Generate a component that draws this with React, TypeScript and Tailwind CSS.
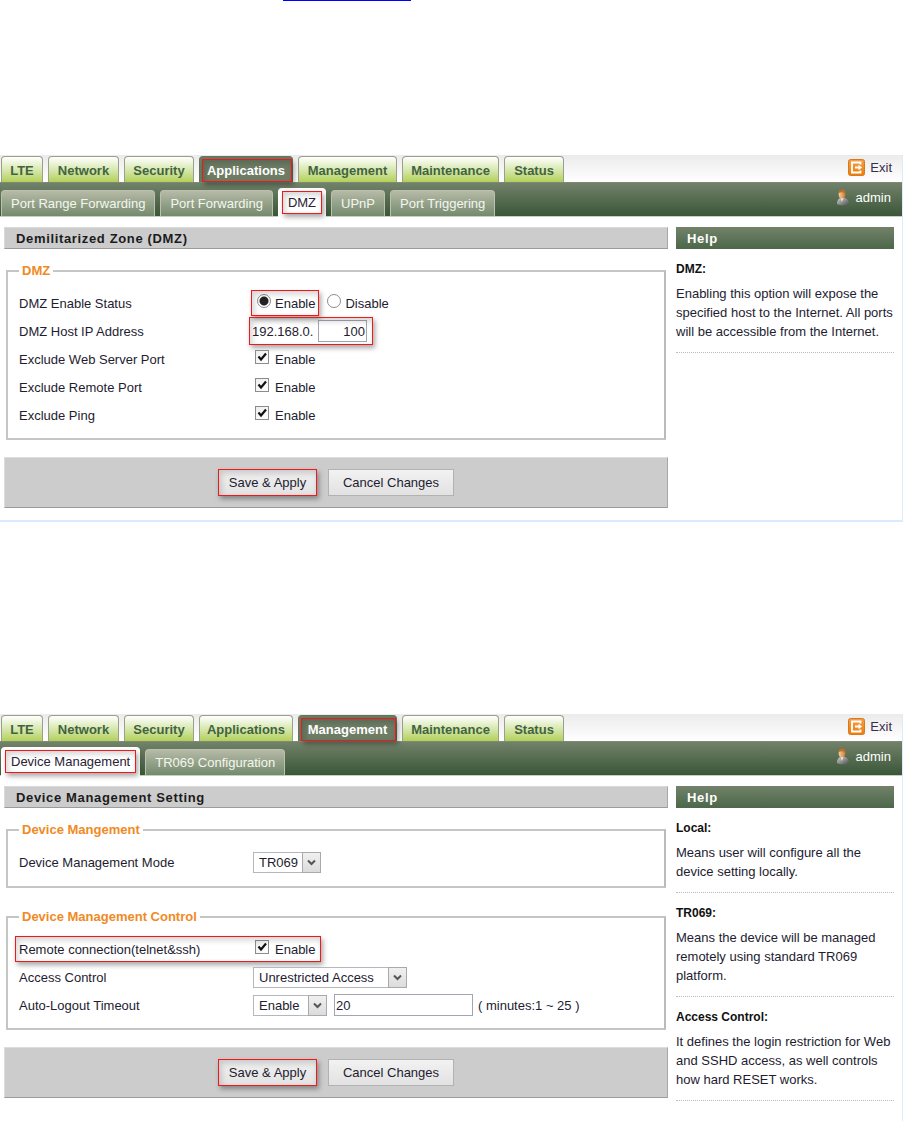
import { ReactNode } from "react";
import clsx from "clsx";

const mainTabs = [
    { name: "LTE", width: "w-[42px]" },
    { name: "Network", width: "w-[71px]" },
    { name: "Security", width: "w-[70px]" },
    { name: "Applications", width: "w-[94px]" },
    { name: "Management", width: "w-[99px]" },
    { name: "Maintenance", width: "w-[97px]" },
    { name: "Status", width: "w-[60px]" },
];

interface HelpItem {
    title: string;
    text: string;
}

interface RouterPageProps {
    activeTab: string;
    subTabs: string[];
    activeSubTab: string;
    title: string;
    help: HelpItem[];
    className?: string;
    children: ReactNode;
}

// Red frame drawn around the thing the reader has to click
function Highlight({ className }: { className: string }) {
    return (
        <span
            className={clsx(
                "absolute pointer-events-none border border-[#f01818] shadow-[2px_3px_5px_rgba(0,0,0,0.35),inset_2px_3px_6px_rgba(0,0,0,0.18)]",
                className
            )}
        />
    );
}

function ExitIcon() {
    return (
        <svg width="17" height="17" viewBox="0 0 17 17" className="shrink-0" aria-hidden="true">
            <defs>
                <linearGradient id="exitFill" x1="0" y1="0" x2="0" y2="1">
                    <stop offset="0" stopColor="#f0a04c" />
                    <stop offset="1" stopColor="#ee7d08" />
                </linearGradient>
            </defs>
            <rect x="0.5" y="0.5" width="16" height="16" rx="2" fill="url(#exitFill)" stroke="#d9791c" />
            <path d="M12.500 5.500V3.500H4V13.500H12.500V11.500" fill="none" stroke="#fff" strokeWidth="1.800" />
            <path d="M7 7.600H10.500V5.800L14.200 8.500L10.500 11.200V9.400H7Z" fill="#fff" />
        </svg>
    );
}

function UserIcon() {
    return (
        <svg width="14" height="17" viewBox="0 0 14 17" className="shrink-0" aria-hidden="true">
            <defs>
                <linearGradient id="userBody" x1="0" y1="0" x2="1" y2="1">
                    <stop offset="0" stopColor="#d4d4d4" />
                    <stop offset="1" stopColor="#4c4c4c" />
                </linearGradient>
                <linearGradient id="userHead" x1="0" y1="0" x2="1" y2="0">
                    <stop offset="0" stopColor="#f6cf98" />
                    <stop offset="1" stopColor="#d07a2c" />
                </linearGradient>
            </defs>
            <path d="M1 15C1 11 3 8.500 6.500 8.500C10 8.500 13 11 13 15C10 16.800 4 16.800 1 15Z" fill="url(#userBody)" />
            <path d="M5 9L5.800 13L7.500 9Z" fill="#f4f4f4" />
            <ellipse cx="6" cy="5.200" rx="3.300" ry="4.300" fill="url(#userHead)" />
            <path d="M2.700 4C2.700 1.500 4 0.500 6 0.500C8.500 0.500 10 2 9.300 6C8.500 3.600 6.500 2.400 2.700 4Z" fill="#b8702c" />
        </svg>
    );
}

function RouterPage({ activeTab, subTabs, activeSubTab, title, help, className, children }: RouterPageProps) {
    return (
        <section className={clsx("mr-px border-r border-[#d9ebfc]", className)}>
            {/* MAIN TABS */}
            <header className="flex h-[27px] items-end justify-between bg-gradient-to-b from-[#ebebeb] to-white pl-px pr-[10px]">
                <nav className="flex gap-[5px]">
                    {mainTabs.map(tab => {
                        const active = tab.name === activeTab;
                        return (
                            <a
                                key={tab.name}
                                href="#"
                                className={clsx(
                                    "relative flex h-[26px] justify-center rounded-t border border-b-0 font-bold leading-[28px]",
                                    tab.width,
                                    active
                                        ? "z-10 border-[#66765d] bg-[#6d7c64] text-white"
                                        : "border-[#9a9f90] bg-gradient-to-b from-white to-[#b3d055] text-[#426341]"
                                )}
                            >
                                {tab.name}
                                {active && <Highlight className="left-[2px] right-0 top-[2px] bottom-0" />}
                            </a>
                        );
                    })}
                </nav>
                <a href="#" className="flex h-[27px] items-center gap-[5px] pb-[3px] text-[#3a2d4c]">
                    <ExitIcon />
                    Exit
                </a>
            </header>

            {/* SUB TABS */}
            <div className="flex h-[35px] items-end justify-between border-t border-b border-t-[#7f8a75] border-b-[#c9cfbe] bg-gradient-to-b from-[#72826a] to-[#3a5638] pl-px pr-[11px]">
                <nav className="flex items-end gap-[5px]">
                    {subTabs.map(tab => {
                        const active = tab === activeSubTab;
                        return (
                            <a
                                key={tab}
                                href="#"
                                className={clsx(
                                    "relative rounded-t border border-b-0 px-[9px]",
                                    active
                                        ? "-mb-px h-[29px] border-white bg-white leading-[28px] text-[#2a2236]"
                                        : "h-[26px] border-[#bcc1ae] bg-gradient-to-b from-[#b6baa6] to-[#738a6e] leading-[26px] text-[#f4f6ee]"
                                )}
                            >
                                {tab}
                                {active && <Highlight className="left-[3px] right-[3px] top-[2px] bottom-[3px]" />}
                            </a>
                        );
                    })}
                </nav>
                <span className="flex h-[27px] items-start gap-[6px] text-white">
                    <UserIcon />
                    <span className="leading-[18px]">admin</span>
                </span>
            </div>

            {/* CONTENT */}
            <div className="flex gap-2 pl-1 pr-2 pt-[10px] pb-3">
                <main className="min-w-0 flex-1">
                    <h2 className="h-[22px] border border-t-[#d9d9d9] border-l-[#d9d9d9] border-r-[#a8a8a8] border-b-[#9b9b9b] bg-[#ccc] px-[11px] font-bold leading-[21px] tracking-wider text-[#1b1b1b]">
                        {title}
                    </h2>
                    {children}
                </main>

                <aside className="w-[218px] shrink-0">
                    <h2 className="h-[22px] bg-gradient-to-b from-[#72826a] to-[#4c6749] px-[11px] font-bold leading-[23px] tracking-wider text-white">
                        Help
                    </h2>
                    {help.map(item => (
                        <div key={item.title} className="border-b border-dotted border-[#bbb] pt-[11px] pb-[11px]">
                            <h3 className="text-xs font-bold leading-[19px] text-[#111]">{item.title}</h3>
                            <p className="mt-[5px] leading-[19px]">{item.text}</p>
                        </div>
                    ))}
                </aside>
            </div>
        </section>
    );
}

function Group({ legend, className, children }: { legend: string; className?: string; children: ReactNode }) {
    return (
        <fieldset className={clsx("mx-[2px] border-2 border-[#c3c6c3] border-r-[#b9bcb9] px-[11px] pt-[10px]", className)}>
            <legend className="px-[3px] font-bold leading-4 text-[#f08a24]">{legend}</legend>
            {children}
        </fieldset>
    );
}

function Row({ label, htmlFor, highlight, children }: { label: string; htmlFor?: string; highlight?: ReactNode; children: ReactNode }) {
    return (
        <div className="relative flex h-7 items-center">
            {htmlFor ? (
                <label htmlFor={htmlFor} className="w-[234px]">{label}</label>
            ) : (
                <span className="w-[234px]">{label}</span>
            )}
            <div className="flex items-center">{children}</div>
            {highlight}
        </div>
    );
}

function Radio({ label, checked, highlighted }: { label: string; checked?: boolean; highlighted?: boolean }) {
    return (
        <label className="relative flex items-center gap-1">
            <input
                type="radio"
                name="dmzStatus"
                defaultChecked={checked}
                className="mb-1 size-[14px] appearance-none rounded-full border border-[#8c8c8c] bg-white checked:bg-[radial-gradient(circle,#222_0,#222_4px,#fff_5px)]"
            />
            {label}
            {highlighted && <Highlight className="-left-[6px] -right-[4px] -top-[4px] -bottom-[3px]" />}
        </label>
    );
}

function Checkbox({ id }: { id: string }) {
    return (
        <span className="flex items-center gap-[6px] pl-[2px]">
            <span className="relative mb-1 size-[14px]">
                <input
                    id={id}
                    type="checkbox"
                    defaultChecked
                    className="peer block size-[14px] appearance-none border border-[#8c8c8c] bg-gradient-to-br from-[#eee] to-white"
                />
                <svg viewBox="0 0 14 14" className="pointer-events-none absolute inset-0 hidden peer-checked:block" aria-hidden="true">
                    <path d="M3.500 6.500L6 9.500L11 3.500" fill="none" stroke="#111" strokeWidth="2.200" />
                </svg>
            </span>
            <label htmlFor={id}>Enable</label>
        </span>
    );
}

function Select({ id, options, className }: { id: string; options: string[]; className: string }) {
    return (
        <span className={clsx("relative block h-[21px]", className)}>
            <select
                id={id}
                className="block h-full w-full appearance-none border border-[#b6b6be] bg-white pt-px pl-[5px] pr-5 leading-[18px]"
            >
                {options.map(option => (
                    <option key={option}>{option}</option>
                ))}
            </select>
            <span className="pointer-events-none absolute inset-y-0 right-0 flex w-[19px] items-center justify-center border border-[#a9a9ad] bg-gradient-to-b from-[#f0f0f0] to-[#dcdcdc]">
                <svg width="9" height="7" viewBox="0 0 9 7" aria-hidden="true">
                    <path d="M1 1.500L4.500 5L8 1.500" fill="none" stroke="#555" strokeWidth="2" />
                </svg>
            </span>
        </span>
    );
}

function Actions() {
    return (
        <div className="mt-[17px] flex h-[51px] items-center justify-center gap-[11px] border border-t-[#ddd] border-l-[#ddd] border-r-[#a8a8a8] border-b-[#9b9b9b] bg-[#ccc]">
            <button type="submit" className="relative h-[27px] w-[99px] bg-gradient-to-b from-[#f2f2f2] to-[#e2e2e2]">
                Save &amp; Apply
                <Highlight className="inset-0" />
            </button>
            <button type="button" className="h-[27px] w-[126px] border border-[#b2b2b2] bg-gradient-to-b from-[#f2f2f2] to-[#e2e2e2]">
                Cancel Changes
            </button>
        </div>
    );
}

export default function App() {
    return (
        <div className="flex min-h-screen flex-col bg-white font-['Liberation_Sans',Arial,sans-serif] text-[13px] leading-[19px] text-[#231c30]">
            <div className="ml-[283px] h-px w-32 bg-[#0000ff]" />

            {/* DMZ */}
            <RouterPage
                activeTab="Applications"
                subTabs={["Port Range Forwarding", "Port Forwarding", "DMZ", "UPnP", "Port Triggering"]}
                activeSubTab="DMZ"
                title="Demilitarized Zone (DMZ)"
                help={[
                    {
                        title: "DMZ:",
                        text: "Enabling this option will expose the specified host to the Internet. All ports will be accessible from the Internet.",
                    },
                ]}
                className="mt-[154px] border-b-2"
            >
                <form>
                    <Group legend="DMZ" className="mt-[14px] pb-[9px]">
                        <Row label="DMZ Enable Status">
                            <span className="flex gap-3 pl-1">
                                <Radio label="Enable" checked highlighted />
                                <Radio label="Disable" />
                            </span>
                        </Row>
                        <Row label="DMZ Host IP Address" htmlFor="dmzHost">
                            <span className="relative flex items-center gap-[5px]">
                                <span className="-ml-px w-[61px]">192.168.0.</span>
                                <input
                                    id="dmzHost"
                                    type="text"
                                    defaultValue="100"
                                    className="h-[22px] w-[49px] border border-[#a4a4b0] bg-white pr-px text-right"
                                />
                                <Highlight className="-left-1 -right-[6px] -top-[3px] -bottom-[3px]" />
                            </span>
                        </Row>
                        <Row label="Exclude Web Server Port">
                            <Checkbox id="excludeWeb" />
                        </Row>
                        <Row label="Exclude Remote Port">
                            <Checkbox id="excludeRemote" />
                        </Row>
                        <Row label="Exclude Ping">
                            <Checkbox id="excludePing" />
                        </Row>
                    </Group>
                    <Actions />
                </form>
            </RouterPage>

            {/* DEVICE MANAGEMENT */}
            <RouterPage
                activeTab="Management"
                subTabs={["Device Management", "TR069 Configuration"]}
                activeSubTab="Device Management"
                title="Device Management Setting"
                help={[
                    { title: "Local:", text: "Means user will configure all the device setting locally." },
                    { title: "TR069:", text: "Means the device will be managed remotely using standard TR069 platform." },
                    {
                        title: "Access Control:",
                        text: "It defines the login restriction for Web and SSHD access, as well controls how hard RESET works.",
                    },
                ]}
                className="mt-48 flex-1"
            >
                <form>
                    <Group legend="Device Mangement" className="mt-[14px] pb-[10px]">
                        <Row label="Device Management Mode" htmlFor="mode">
                            <Select id="mode" options={["TR069", "Local"]} className="w-[68px]" />
                        </Row>
                    </Group>
                    <Group legend="Device Management Control" className="mt-[21px] pb-[9px]">
                        <Row
                            label="Remote connection(telnet&ssh)"
                            highlight={<Highlight className="-left-1 top-px bottom-px w-[306px]" />}
                        >
                            <Checkbox id="remoteConnection" />
                        </Row>
                        <Row label="Access Control" htmlFor="accessControl">
                            <Select id="accessControl" options={["Unrestricted Access", "Restricted Access"]} className="w-[154px]" />
                        </Row>
                        <Row label="Auto-Logout Timeout" htmlFor="autoLogout">
                            <Select id="autoLogout" options={["Enable", "Disable"]} className="w-[74px]" />
                            <input
                                type="text"
                                aria-label="Timeout in minutes"
                                defaultValue="20"
                                className="ml-[7px] mr-[5px] h-[22px] w-[139px] border border-[#a4a4b0] bg-white pl-px"
                            />
                            <span>( minutes:1 ~ 25 )</span>
                        </Row>
                    </Group>
                    <Actions />
                </form>
            </RouterPage>
        </div>
    );
}
